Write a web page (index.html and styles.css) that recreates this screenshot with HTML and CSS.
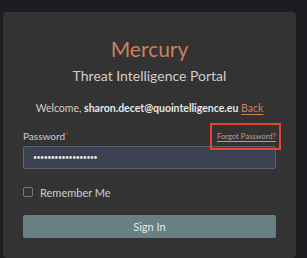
FILE: index.html
```html
<!DOCTYPE html>
<html>
<head>
<meta charset="utf-8">
<link rel="stylesheet" href="styles.css">
</head>
<body>
<div class="card">
  <h1 class="brand">Mercury</h1>
  <div class="subtitle">Threat Intelligence Portal</div>
  <div class="welcome">Welcome, <b>sharon.decet@quointelligence.eu</b> <a class="link">Back</a></div>
  <div class="label-row">
    <span class="label">Password<span class="req">*</span></span>
    <a class="forgot">Forgot Password?</a>
  </div>
  <div class="input">••••••••••••••••••</div>
  <label class="remember"><span class="check"></span>Remember Me</label>
  <div class="btn">Sign In</div>
</div>
</body>
</html>
```
FILE: styles.css
```css
html, body { margin: 0; padding: 0; }
body {
  background: #1c1d20;
  width: 307px;
  height: 258px;
  overflow: hidden;
  font-family: Lato, "Open Sans", sans-serif;
}
.card {
  margin: 12px 0 0 3px;
  width: 253px;
  height: 246px;
  padding: 0 20px;
  background: #333333;
  border-radius: 4px;
  box-sizing: content-box;
}
.brand {
  margin: 0;
  padding-top: 22px;
  text-align: center;
  font-weight: 400;
  font-size: 21px;
  line-height: 30px;
  color: #c9805f;
}
.subtitle {
  margin-top: 3px;
  text-align: center;
  font-size: 14px;
  line-height: 18px;
  color: #cfcfcf;
}
.welcome {
  margin-top: 16px;
  text-align: center;
  font-size: 10.5px;
  line-height: 14px;
  color: #cfcfcf;
  white-space: nowrap;
}
.welcome b { color: #e6e6e6; font-weight: 700; }
.link {
  color: #c9805f;
  text-decoration: underline;
  text-underline-offset: 2px;
}
.label-row {
  margin-top: 14px;
  display: flex;
  justify-content: space-between;
  align-items: center;
  height: 14px;
}
.label { font-size: 10px; color: #cfcfcf; }
.req { color: #d0443a; font-size: 8px; vertical-align: top; }
.forgot {
  position: relative;
  font-size: 7.6px;
  color: #c29a88;
  text-decoration: underline;
  text-underline-offset: 2px;
}
.forgot::after {
  content: "";
  position: absolute;
  left: -7px;
  right: -5px;
  top: -8px;
  bottom: -9px;
  border: 2px solid #e8432e;
}
.input {
  margin-top: 3px;
  height: 21px;
  border: 1px solid #5d6470;
  border-radius: 2px;
  background: #3b4150;
  color: #e8e8e8;
  font-size: 7px;
  line-height: 21px;
  padding-left: 9px;
  letter-spacing: -0.5px;
}
.remember {
  margin-top: 18px;
  display: flex;
  align-items: center;
  gap: 7px;
  font-size: 11px;
  color: #cfcfcf;
  height: 10px;
}
.check {
  width: 8px;
  height: 8px;
  border: 1px solid #7a7a7a;
  border-radius: 2px;
}
.btn {
  margin-top: 18px;
  height: 23px;
  background: #687f84;
  border-radius: 2px;
  color: #e4e9ea;
  text-align: center;
  font-size: 11px;
  line-height: 23px;
}
```
